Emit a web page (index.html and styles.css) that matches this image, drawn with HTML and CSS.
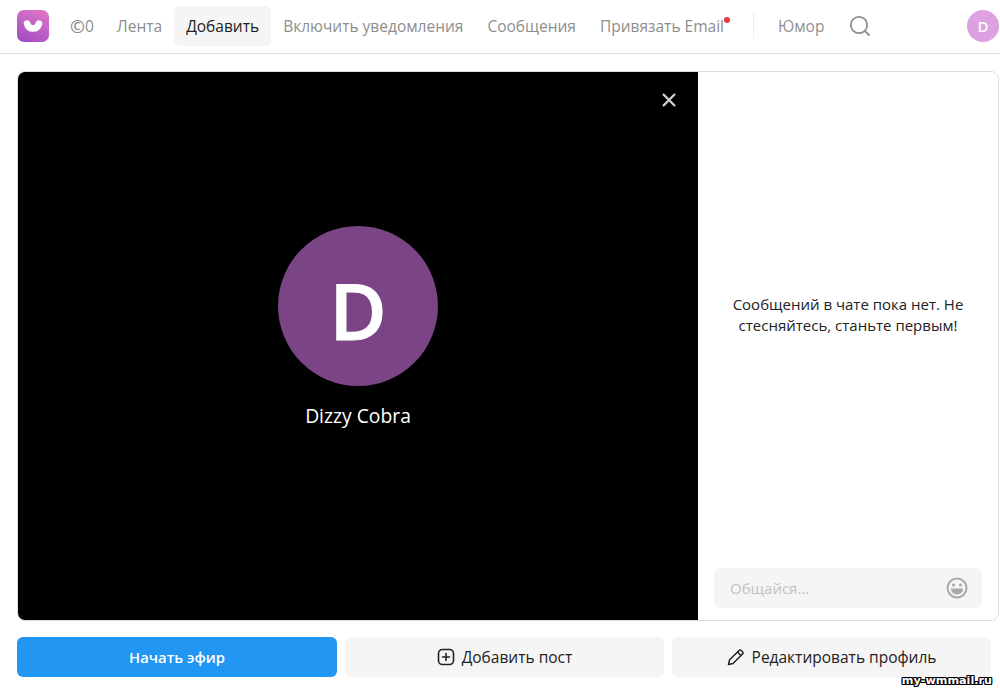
FILE: index.html
```html
<!DOCTYPE html>
<html lang="en">
<head>
    <meta charset="UTF-8">
    <title>Эфир</title>
    <link rel="stylesheet" href="styles.css">
</head>
<body>
    <!-- Header -->
    <div class="navbar">
        <svg class="logo" width="32" height="32" viewBox="0 0 32 32">
            <defs>
                <linearGradient id="logoGrad" x1="0.7" y1="0" x2="0.3" y2="1">
                    <stop offset="0" stop-color="#de74c6"/>
                    <stop offset="1" stop-color="#a24fc4"/>
                </linearGradient>
            </defs>
            <rect width="32" height="32" rx="7" fill="url(#logoGrad)"/>
            <path d="M10 13.500c1 3.500 3 5 6 5s5-1.500 6-5" fill="none" stroke="#fff" stroke-width="6.500" stroke-linecap="round"/>
        </svg>
        <a class="nav-item coins"><span class="coin-sign">©</span>0</a>
        <a class="nav-item">Лента</a>
        <a class="nav-item active">Добавить</a>
        <a class="nav-item">Включить уведомления</a>
        <a class="nav-item">Сообщения</a>
        <a class="nav-item email">Привязать Email<span class="dot"></span></a>
        <span class="divider"></span>
        <a class="nav-item">Юмор</a>
        <svg class="search" width="22" height="22" viewBox="0 0 22 22" fill="none" stroke="#8e8e8e" stroke-width="1.800">
            <circle cx="10" cy="10" r="8.200"/>
            <path d="M16 16l4 4" stroke-linecap="round"/>
        </svg>
        <div class="nav-avatar">D</div>
    </div>

    <!-- Stream card -->
    <div class="stream">
        <div class="video">
            <svg class="close" width="16" height="16" viewBox="0 0 16 16" stroke="#cfcfcf" stroke-width="2.400">
                <path d="M2 2l12 12M14 2L2 14"/>
            </svg>
            <div class="big-avatar">D</div>
            <div class="stream-name">Dizzy Cobra</div>
        </div>
        <div class="chat">
            <p class="chat-empty">Сообщений в чате пока нет. Не стесняйтесь, станьте первым!</p>
            <div class="chat-input">
                <span>Общайся...</span>
                <svg width="22" height="22" viewBox="0 0 22 22">
                    <circle cx="11" cy="11" r="9.500" fill="none" stroke="#a9a9a9" stroke-width="2"/>
                    <circle cx="7.500" cy="8" r="1.500" fill="#a9a9a9"/>
                    <circle cx="14.500" cy="8" r="1.500" fill="#a9a9a9"/>
                    <path d="M5 11.500h12c0 3.500-2.700 6-6 6s-6-2.500-6-6z" fill="#a9a9a9"/>
                </svg>
            </div>
        </div>
    </div>

    <!-- Actions -->
    <div class="actions">
        <button class="btn btn-primary">Начать эфир</button>
        <button class="btn">
            <svg width="18" height="18" viewBox="0 0 18 18" fill="none" stroke="#222" stroke-width="1.600">
                <rect x="1.500" y="1.500" width="15" height="15" rx="4"/>
                <path d="M9 5.500v7M5.500 9h7" stroke-linecap="round"/>
            </svg>
            Добавить пост
        </button>
        <button class="btn">
            <svg width="18" height="18" viewBox="0 0 18 18" fill="none" stroke="#222" stroke-width="1.500">
                <path d="M1.500 16.500l1-4.500L12 2.500c.7-.7 1.700-.7 2.300 0l1.200 1.200c.7.700.7 1.700 0 2.300L6 15.500z" stroke-linejoin="round"/>
                <path d="M10.500 4l3.500 3.500"/>
            </svg>
            Редактировать профиль
        </button>
    </div>

    <div class="watermark">my-wmmail.ru</div>
</body>
</html>
```

FILE: styles.css
```css
/* Base Styles */
* {
    margin: 0;
    padding: 0;
    box-sizing: border-box;
    font-family: "Open Sans", "Noto Sans", sans-serif;
}
html, body {
    height: 690px;
    overflow: hidden;
}
body {
    position: relative;
    width: 1000px;
    background-color: #fff;
}
/* Navbar */
.navbar {
    display: flex;
    align-items: center;
    height: 54px;
    padding: 0 1px 1px 17px;
    border-bottom: 1px solid #dcdcdc;
}
.logo {
    flex: none;
    margin-right: 8px;
}
.nav-item {
    display: flex;
    align-items: center;
    height: 40px;
    padding: 0 12px;
    border-radius: 6px;
    font-size: 15.500px;
    color: #8e8e8e;
    white-space: nowrap;
}
.nav-item.coins {
    padding: 0 11px 0 13px;
}
.nav-item.active {
    background-color: #f5f5f5;
    color: #222;
}
.coin-sign {
    font-size: 18px;
    font-weight: 600;
}
.email {
    position: relative;
}
.dot {
    position: absolute;
    top: 11px;
    right: 6px;
    width: 6px;
    height: 6px;
    border-radius: 50%;
    background-color: #e53935;
}
.divider {
    width: 1px;
    height: 26px;
    margin: 0 12px 0 17px;
    background-color: #eee;
}
.search {
    margin-left: 13px;
}
.nav-avatar {
    display: flex;
    align-items: center;
    justify-content: center;
    width: 32px;
    height: 32px;
    margin-left: auto;
    border-radius: 50%;
    background-color: #dda0e0;
    color: #fff;
    font-size: 15px;
    font-weight: 600;
}
/* Stream card */
.stream {
    display: flex;
    width: 982px;
    height: 550px;
    margin: 17px 0 0 17px;
    border: 1px solid #dcdcdc;
    border-radius: 8px;
    overflow: hidden;
}
.video {
    position: relative;
    display: flex;
    flex-direction: column;
    align-items: center;
    width: 680px;
    padding-top: 154px;
    background-color: #000;
}
.close {
    position: absolute;
    top: 20px;
    right: 21px;
}
.big-avatar {
    display: flex;
    align-items: center;
    justify-content: center;
    width: 160px;
    height: 160px;
    padding-top: 8px;
    border-radius: 50%;
    background-color: #7b4485;
    color: #fff;
    font-size: 78px;
    font-weight: 600;
    -webkit-text-stroke: 1px #fff;
}
.stream-name {
    margin-top: 16px;
    color: #fff;
    font-size: 19.300px;
    line-height: 28px;
}
.chat {
    display: flex;
    flex: 1;
    flex-direction: column;
    padding: 0 16px;
    background-color: #fff;
}
.chat-empty {
    margin-top: 222px;
    padding: 0 12px;
    color: #222;
    font-size: 15px;
    line-height: 21px;
    text-align: center;
}
.chat-input {
    display: flex;
    align-items: center;
    justify-content: space-between;
    height: 40px;
    margin-top: auto;
    margin-bottom: 12px;
    padding: 0 14px 0 16px;
    border-radius: 6px;
    background-color: #f5f5f5;
    color: #c2c2c2;
    font-size: 15px;
}
/* Actions */
.actions {
    display: grid;
    grid-template-columns: 320px 1fr 1fr;
    gap: 8px;
    width: 974px;
    margin: 16px 0 0 17px;
}
.btn {
    display: flex;
    align-items: center;
    justify-content: center;
    gap: 7px;
    height: 40px;
    border: none;
    border-radius: 6px;
    background-color: #f5f5f5;
    color: #222;
    font-size: 15.500px;
}
.btn-primary {
    background-color: #2196f3;
    color: #fff;
    font-size: 14.800px;
    font-weight: 600;
}
.watermark {
    position: absolute;
    right: 8px;
    bottom: 3px;
    color: #fff;
    font-family: "DejaVu Sans", sans-serif;
    font-size: 11.200px;
    font-weight: 700;
    text-shadow: -1px 0 #000, 1px 0 #000, 0 -1px #000, 0 1px #000, -1px -1px #000, 1px 1px #000, 1px -1px #000, -1px 1px #000;
}
```
